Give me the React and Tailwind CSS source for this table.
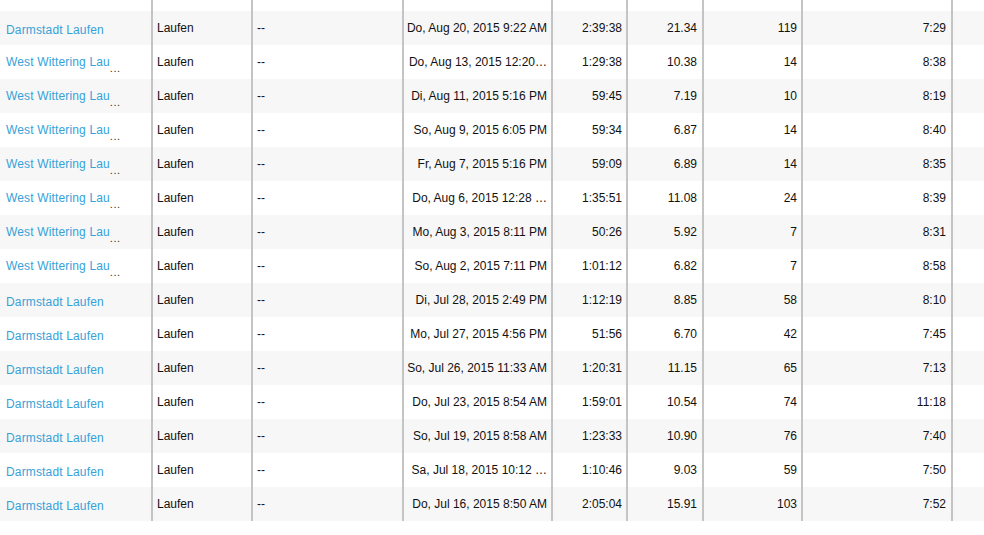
import React from "react";

const rows = [
  ["Darmstadt Laufen", false, "Do, Aug 20, 2015 9:22 AM", "2:39:38", "21.34", "119", "7:29"],
  ["West Wittering Lau", true, "Do, Aug 13, 2015 12:20…", "1:29:38", "10.38", "14", "8:38"],
  ["West Wittering Lau", true, "Di, Aug 11, 2015 5:16 PM", "59:45", "7.19", "10", "8:19"],
  ["West Wittering Lau", true, "So, Aug 9, 2015 6:05 PM", "59:34", "6.87", "14", "8:40"],
  ["West Wittering Lau", true, "Fr, Aug 7, 2015 5:16 PM", "59:09", "6.89", "14", "8:35"],
  ["West Wittering Lau", true, "Do, Aug 6, 2015 12:28 …", "1:35:51", "11.08", "24", "8:39"],
  ["West Wittering Lau", true, "Mo, Aug 3, 2015 8:11 PM", "50:26", "5.92", "7", "8:31"],
  ["West Wittering Lau", true, "So, Aug 2, 2015 7:11 PM", "1:01:12", "6.82", "7", "8:58"],
  ["Darmstadt Laufen", false, "Di, Jul 28, 2015 2:49 PM", "1:12:19", "8.85", "58", "8:10"],
  ["Darmstadt Laufen", false, "Mo, Jul 27, 2015 4:56 PM", "51:56", "6.70", "42", "7:45"],
  ["Darmstadt Laufen", false, "So, Jul 26, 2015 11:33 AM", "1:20:31", "11.15", "65", "7:13"],
  ["Darmstadt Laufen", false, "Do, Jul 23, 2015 8:54 AM", "1:59:01", "10.54", "74", "11:18"],
  ["Darmstadt Laufen", false, "So, Jul 19, 2015 8:58 AM", "1:23:33", "10.90", "76", "7:40"],
  ["Darmstadt Laufen", false, "Sa, Jul 18, 2015 10:12 …", "1:10:46", "9.03", "59", "7:50"],
  ["Darmstadt Laufen", false, "Do, Jul 16, 2015 8:50 AM", "2:05:04", "15.91", "103", "7:52"],
];

const cell = "border-l-2 border-[#c4c4c4] h-full flex items-center px-1 whitespace-nowrap overflow-hidden";

const Row = ({ data, striped, height }) => {
  const [name, cut, date, time, dist, cal, pace] = data || [];
  return (
    <div className={`flex ${height} ${striped ? "bg-[#f7f7f7]" : "bg-white"}`}>
      <div
        className={`w-[151px] shrink-0 h-full flex items-center pl-[6px] whitespace-nowrap overflow-hidden ${
          cut ? "pt-0" : "pt-[3px]"
        }`}
      >
        {name && (
          <span className="text-[#35a2d9] tracking-[0.15px]">
            {name}
            {cut && <span className="relative top-[6px] text-[#333] text-[11px] tracking-[0.5px]">...</span>}
          </span>
        )}
      </div>
      <div className={`${cell} w-[100px] shrink-0`}>{data && "Laufen"}</div>
      <div className={`${cell} w-[151px] shrink-0`}>{data && "--"}</div>
      <div className={`${cell} w-[149px] shrink-0 justify-end`}>{date}</div>
      <div className={`${cell} w-[75px] shrink-0 justify-end`}>{time}</div>
      <div className={`${cell} w-[76px] shrink-0 justify-end pr-[5px]`}>{dist}</div>
      <div className={`${cell} w-[99px] shrink-0 justify-end`}>{cal}</div>
      <div className={`${cell} w-[150px] shrink-0 justify-end pr-[5px]`}>{pace}</div>
      <div className={`${cell} flex-1`}></div>
    </div>
  );
};

export default function App() {
  return (
    <div className="w-[984px] h-[535px] bg-white overflow-hidden text-[12px] text-[#111] font-['Liberation_Sans',Arial,sans-serif]">
      <Row striped={false} height="h-[11px]" />
      {rows.map((r, i) => (
        <Row key={i} data={r} striped={i % 2 === 0} height="h-[34px]" />
      ))}
    </div>
  );
}
